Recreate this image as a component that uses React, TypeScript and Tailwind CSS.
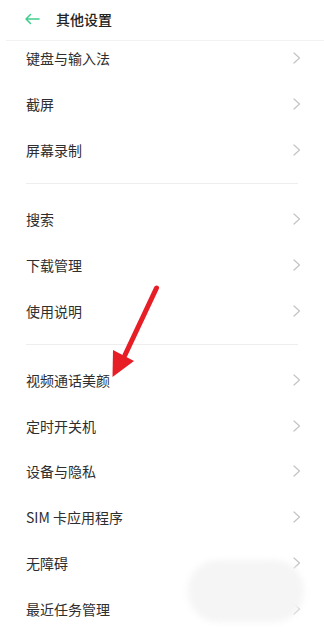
const groups: string[][] = [
  ['键盘与输入法', '截屏', '屏幕录制'],
  ['搜索', '下载管理', '使用说明'],
  ['视频通话美颜', '定时开关机', '设备与隐私', 'SIM 卡应用程序', '无障碍', '最近任务管理'],
]

function Chevron() {
  return (
    <svg width="8" height="12" viewBox="0 0 8 12">
      <path d="M1 1l5.5 5L1 11" fill="none" stroke="#c4c4c4" strokeWidth="1.2" strokeLinecap="round" strokeLinejoin="round" />
    </svg>
  )
}

function Row({ label, first }: { label: string; first?: boolean }) {
  return (
    <div
      className={
        first
          ? 'flex h-[40px] items-center justify-between pb-[6px] pl-[26px] pr-[23px]'
          : 'flex h-[45.8px] items-center justify-between pl-[26px] pr-[23px]'
      }
    >
      <span className="text-[14px] leading-[18px] text-[#2e2e2e]">{label}</span>
      <Chevron />
    </div>
  )
}

export default function App() {
  return (
    <div
      className="relative h-[632px] w-[324px] overflow-hidden bg-white"
      style={{ fontFamily: '"Noto Sans CJK SC", "Noto Sans", sans-serif' }}
    >
      {/* Header */}
      <div className="ml-[6px] flex h-[41px] items-center border-b border-[#f2f2f2] pb-[2px]">
        <svg width="16" height="12" viewBox="0 0 16 12" className="ml-[18px]">
          <path d="M15 6H2M6.5 1.5L2 6l4.5 4.5" fill="none" stroke="#3fce8c" strokeWidth="1.5" strokeLinecap="round" strokeLinejoin="round" />
        </svg>
        <span className="ml-[16px] text-[14px] font-medium text-[#222222]">其他设置</span>
      </div>

      {/* List */}
      {groups.map((items, gi) => (
        <div key={gi}>
          {gi > 0 && <div className="mx-[26px] mb-[12px] mt-[10.5px] h-px bg-[#eeeeee]" />}
          {items.map((label, i) => (
            <Row key={label} label={label} first={gi === 0 && i === 0} />
          ))}
        </div>
      ))}

      {/* Blurred watermark patch */}
      <div className="absolute left-[188px] top-[560px] h-[62px] w-[116px] rounded-[30px] bg-[#f5f5f5] blur-[3px]" />

      {/* Red annotation arrow */}
      <svg className="absolute left-0 top-0" width="324" height="632" viewBox="0 0 324 632">
        <line x1="156.5" y1="288" x2="125" y2="355" stroke="#e81e27" strokeWidth="5" strokeLinecap="round" />
        <polygon points="112.5,377 113,350 134,361" fill="#e81e27" />
      </svg>
    </div>
  )
}
